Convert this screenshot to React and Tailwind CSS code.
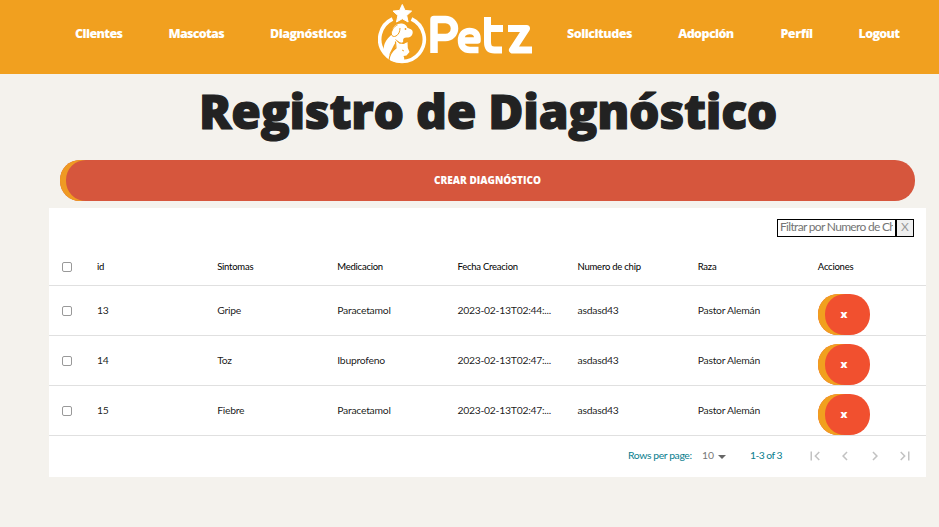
import React from "react";

const leftLinks = [
  { label: "Clientes", box: "w-[47px]", fit: "tracking-[-0.6px]" },
  { label: "Mascotas", box: "w-[55px]", fit: "tracking-[-0.7px]" },
  { label: "Diagnósticos", box: "w-[77px]", fit: "tracking-[-0.5px]" },
];
const rightLinks = [
  { label: "Solicitudes", box: "w-[65px]", fit: "tracking-[-0.5px]" },
  { label: "Adopción", box: "w-[56px]", fit: "tracking-[-0.6px]" },
  { label: "Perfíl", box: "w-[32px]", fit: "tracking-[-0.4px]" },
  { label: "Logout", box: "w-[42px]", fit: "tracking-[-0.7px]" },
];

const columns = ["id", "Sintomas", "Medicacion", "Fecha Creacion", "Numero de chip", "Raza", "Acciones"];
const rows = [
  ["13", "Gripe", "Paracetamol", "2023-02-13T02:44:...", "asdasd43", "Pastor Alemán"],
  ["14", "Toz", "Ibuprofeno", "2023-02-13T02:47:...", "asdasd43", "Pastor Alemán"],
  ["15", "Fiebre", "Paracetamol", "2023-02-13T02:47:...", "asdasd43", "Pastor Alemán"],
];

function NavLinks({ links }) {
  return links.map((l) => (
    <a key={l.label} className={`${l.box} ${l.fit} whitespace-nowrap`}>{l.label}</a>
  ));
}

function Logo() {
  return (
    <svg width="156" height="64" viewBox="0 0 156 64" fill="none" aria-label="Petz">
      <path d="M14.500 19A22.300 22.300 0 1 0 33.500 19" stroke="#fff" strokeWidth="3.600" />
      <path d="M24.300 4.500l2.700 5.900 6.600.7-4.900 4.400 1.400 6.500-5.800-3.300-5.800 3.300 1.400-6.500-4.900-4.400 6.600-.7z" fill="#fff" stroke="#fff" strokeWidth="1" strokeLinejoin="round" />
      <path d="M14 31c1-5 5-8 10-7.500 3 .3 4.500 2 5.500 4.500 3 1 5.200 1.500 5.200 4 0 3.500-2 5.500-6 5.500-3 0-4 1.500-3.500 4l-1.500 2-5-3-3 5-4 8-1 5c-5-4-6-10-4-15 1.500-4 5-7 7-9z" fill="#fff" />
      <path d="M19.500 25c-3 .5-6.500 6-6.200 9 .3 2.500 3 3 4.700 2 2.500-1.500 4-4 4-8" fill="#fff" stroke="#f1a01f" strokeWidth="1" />
      <circle cx="27.500" cy="29" r=".9" fill="#f1a01f" />
      <path d="M17.500 40l4 3.500 4 .5 4-2 .3 6 1.700 4-3 3.500-3 .5c1 2 1 4 0 6-5 1-11-.5-15.500-3 1-5 5-8 7.500-11z" fill="#fff" />
      <path d="M17.500 41.500l.5 6.500c-4 3-6.500 7-7 12" stroke="#f1a01f" strokeWidth="1.200" />
      <path d="M17.500 39.500l4 3.300 4 .5 4.500-2.300" stroke="#f1a01f" strokeWidth=".8" />
      <path d="M26 51l-2-1" stroke="#f1a01f" strokeWidth=".9" />
      <g stroke="#fff" strokeWidth="8" strokeLinejoin="round">
        <path d="M56 53V19.500H67.500a8.800 8.800 0 0 1 0 18H56" strokeWidth="7.500" />
        <path d="M83 40.500h16.500v-2c0-5-3-7.500-8-7.500s-8.500 3.500-8.500 9.500 3.200 9.500 9 9.500h8.500" strokeWidth="6.500" />
        <path d="M109.500 17v25c0 5.500 2 8 7 8h7.500M109.500 28.500H125" strokeWidth="7" />
        <path d="M130 28.500h18.500l-14 21.500H154" strokeWidth="7" />
      </g>
    </svg>
  );
}

function DeleteButton() {
  return (
    <button className="flex h-[41px] w-[52px] items-center justify-center rounded-[20px] bg-[#f1502f] font-['Open_Sans',sans-serif] text-[11px] font-extrabold text-white shadow-[inset_7px_0_0_#f1a01f]">
      x
    </button>
  );
}

function Check() {
  return <input type="checkbox" className="block size-[10px] appearance-none rounded-[2px] border border-[#999] bg-white" />;
}

function PageIcon({ bar, flip }) {
  return (
    <svg width="18" height="18" viewBox="0 0 24 24" fill="#c2c2c2" className={flip ? "rotate-180" : ""}>
      {bar ? <path d="M18.410 16.590 13.820 12l4.590-4.590L17 6l-6 6 6 6zM6 6h2v12H6z" /> : <path d="M15.410 7.410 14 6l-6 6 6 6 1.410-1.410L10.830 12z" />}
    </svg>
  );
}

export default function App() {
  return (
    <div className="h-[527px] w-[939px] overflow-hidden bg-[#f4f2ed] font-['Lato',sans-serif] text-black">
      <header className="flex h-[74px] bg-[#f1a01f] font-['Open_Sans',sans-serif] text-[12.500px] leading-[18px] font-extrabold text-white">
        <nav className="flex w-[378px] gap-[46.500px] pt-[25px] pl-[75px]"><NavLinks links={leftLinks} /></nav>
        <Logo />
        <nav className="flex gap-[46.200px] pt-[25px] pl-[33px]"><NavLinks links={rightLinks} /></nav>
      </header>

      <h1 className="mt-[3px] ml-[199px] h-[68px] w-[579px] font-['Open_Sans',sans-serif] text-[48px] leading-[68px] font-extrabold tracking-[-0.25px] whitespace-nowrap text-[#222] [-webkit-text-stroke:1.2px_#222] [stroke-linejoin:round]">
        Registro de Diagnóstico
      </h1>

      <button className="mt-[15px] ml-[60px] flex h-[41px] w-[855px] items-center justify-center rounded-[20px] bg-[#d6563d] font-['Open_Sans',sans-serif] text-[10px] font-extrabold text-white shadow-[inset_6px_0_0_#ef9a23]">
        CREAR DIAGNÓSTICO
      </button>

      <main className="mt-[7px] ml-[49px] h-[269px] w-[877px] bg-white">
        <div className="flex h-[41px] justify-end pt-[11px] pr-3">
          <input placeholder="Filtrar por Numero de Chip" className="h-[18px] w-[119px] border border-black px-[2px] pb-[2px] text-[12px] tracking-[-0.68px] placeholder:text-[#757575]" />
          <button className="flex h-[18px] w-[18px] items-center justify-center border border-black bg-[#efefef] pb-[2px] text-[12px] text-[#999]">X</button>
        </div>

        <div className="flex h-[37px] items-center border-b border-[#e0e0e0] text-[9.500px] tracking-[-0.24px]">
          <div className="w-9 pl-[13px]"><Check /></div>
          {columns.map((c) => <div key={c} className="min-w-0 flex-1 px-3 whitespace-nowrap">{c}</div>)}
        </div>

        {rows.map((r) => (
          <div key={r[0]} className="flex h-[50px] items-center border-b border-[#e0e0e0] text-[10.400px] tracking-[-0.26px] text-black/90">
            <div className="w-9 pl-[13px]"><Check /></div>
            {r.map((c, j) => <div key={j} className="min-w-0 flex-1 px-3 whitespace-nowrap">{c}</div>)}
            <div className="flex h-full min-w-0 flex-1 items-end px-3"><DeleteButton /></div>
          </div>
        ))}

        <footer className="flex h-[41px] items-center pb-px text-[10.400px] tracking-[-0.4px] text-[#087d8d]">
          <span className="ml-[579px] w-[74px] whitespace-nowrap">Rows per page:</span>
          <span className="w-4 tracking-normal text-[#777]">10</span>
          <svg width="8" height="4" viewBox="0 0 8 4" className="mt-px block"><path d="M0 0h8L4 4z" fill="#666" /></svg>
          <span className="ml-6 w-[56px] tracking-[-0.55px] whitespace-nowrap">1-3 of 3</span>
          <div className="flex gap-3">
            <PageIcon bar /><PageIcon /><PageIcon flip /><PageIcon bar flip />
          </div>
        </footer>
      </main>
    </div>
  );
}
